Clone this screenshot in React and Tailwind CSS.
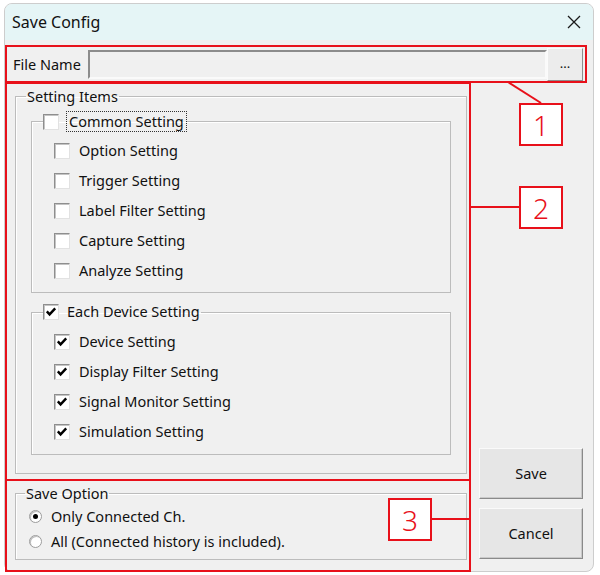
import React from 'react';

const FONT = { fontFamily: '"Noto Sans", "Liberation Sans", sans-serif' };

const COMMON_ITEMS = ['Option Setting', 'Trigger Setting', 'Label Filter Setting', 'Capture Setting', 'Analyze Setting'];
const DEVICE_ITEMS = ['Device Setting', 'Display Filter Setting', 'Signal Monitor Setting', 'Simulation Setting'];

function Check({ checked }) {
  return (
    <span className="w-[16px] h-[16px] shrink-0 bg-white border border-t-[#8e8e8e] border-l-[#8e8e8e] border-b-[#e2e2e2] border-r-[#e2e2e2] shadow-[inset_1px_1px_0_#c4c4c4] flex items-center justify-center">
      {checked && (
        <svg width="12" height="12" viewBox="0 0 12 12">
          <path d="M1.8 5.4 L4.6 8.4 L10.2 2.4" fill="none" stroke="#000" strokeWidth="2.4" />
        </svg>
      )}
    </span>
  );
}

function Radio({ checked }) {
  return (
    <span className="w-[13px] h-[13px] shrink-0 rounded-full bg-white border border-[#9c9c9c] shadow-[inset_1px_1px_0_#bdbdbd] flex items-center justify-center">
      {checked && <span className="w-[5px] h-[5px] rounded-full bg-black" />}
    </span>
  );
}

function Row({ label, checked }) {
  return (
    <div className="h-[30px] flex items-center gap-[9px] pl-[22px]">
      <Check checked={checked} />
      <span>{label}</span>
    </div>
  );
}

export default function App() {
  return (
    <div className="relative w-[600px] h-[575px] bg-white pt-[3px] pl-[4px] overflow-hidden text-[14.5px] text-[#111]" style={FONT}>
      {/* Dialog window */}
      <div className="w-[590px] h-[569px] rounded-t-[8px] rounded-b-[8px] border border-[#cdcdcd] bg-[#f0f0f0] overflow-hidden flex flex-col">
        <div className="h-[36px] shrink-0 bg-[#e5f5f6] flex items-center justify-between pl-[7px] pr-[12px]">
          <span className="text-[16px]">Save Config</span>
          <svg width="14" height="14" viewBox="0 0 14 14">
            <path d="M1 1 L13 13 M13 1 L1 13" stroke="#1a1a1a" strokeWidth="1.3" />
          </svg>
        </div>

        {/* File name row */}
        <div className="mt-[8px] h-[33px] flex items-center pl-[8px]">
          <span className="w-[75px]">File Name</span>
          <div className="w-[459px] h-[29px] bg-[#f0f0f0] border-2 border-t-[#8c8c8c] border-l-[#8c8c8c] border-b-[#fafafa] border-r-[#fafafa]" />
          <button
            type="button"
            className="w-[36px] h-[33px] bg-[#ececec] border border-t-[#fbfbfb] border-l-[#fbfbfb] border-b-[#8d8d8d] border-r-[#8d8d8d] text-[13px] leading-none pb-[3px]"
          >
            ...
          </button>
        </div>

        {/* Main */}
        <div className="mt-[7px] flex items-end pl-[10px]">
          <div className="w-[452px] flex flex-col">
            <fieldset className="border border-[#bcbcbc] shadow-[inset_1px_1px_0_#fff]">
              <legend className="ml-[10px] px-[1px] leading-[16px]">Setting Items</legend>
              <div className="px-[15px] pt-[7px] pb-[18px]">
                <fieldset className="border border-[#bcbcbc] shadow-[inset_1px_1px_0_#fff]">
                  <legend className="ml-[11px] h-[21px] flex items-center gap-[7px]">
                    <Check checked={false} />
                    <span className="h-[21px] px-[2px] flex items-center border border-dotted border-[#333]">Common Setting</span>
                  </legend>
                  <div className="pt-[4px] pb-[6px]">
                    {COMMON_ITEMS.map((t) => (
                      <Row key={t} label={t} checked={false} />
                    ))}
                  </div>
                </fieldset>

                <fieldset className="mt-[9px] border border-[#bcbcbc] shadow-[inset_1px_1px_0_#fff]">
                  <legend className="ml-[11px] h-[20px] flex items-center gap-[8px] pr-[1px]">
                    <Check checked />
                    <span>Each Device Setting</span>
                  </legend>
                  <div className="pt-[5px] pb-[7px]">
                    {DEVICE_ITEMS.map((t) => (
                      <Row key={t} label={t} checked />
                    ))}
                  </div>
                </fieldset>
              </div>
            </fieldset>

            <fieldset className="mt-[11px] border border-[#bcbcbc] shadow-[inset_1px_1px_0_#fff]">
              <legend className="ml-[9px] px-[1px] leading-[16px]">Save Option</legend>
              <div className="pt-[3px] pb-[5px] pl-[13px]">
                <div className="h-[25px] flex items-center gap-[9px]">
                  <Radio checked />
                  <span>Only Connected Ch.</span>
                </div>
                <div className="h-[25px] flex items-center gap-[9px]">
                  <Radio checked={false} />
                  <span>All (Connected history is included).</span>
                </div>
              </div>
            </fieldset>
          </div>

          <div className="ml-[12px] w-[104px] mb-[1px] flex flex-col gap-[9px]">
            <button type="button" className="h-[51px] bg-[#e6e6e6] border border-t-[#fafafa] border-l-[#fafafa] border-b-[#8a8a8a] border-r-[#8a8a8a] shadow-[inset_-1px_-1px_0_#c9c9c9]">
              Save
            </button>
            <button type="button" className="h-[51px] bg-[#e6e6e6] border border-t-[#fafafa] border-l-[#fafafa] border-b-[#8a8a8a] border-r-[#8a8a8a] shadow-[inset_-1px_-1px_0_#c9c9c9]">
              Cancel
            </button>
          </div>
        </div>
      </div>

      {/* Red annotations */}
      <div className="absolute left-[5px] top-[45px] w-[582px] h-[38px] border-2 border-[#e8101a]" />
      <div className="absolute left-[5px] top-[82px] w-[466px] h-[399px] border-2 border-[#e8101a]" />
      <div className="absolute left-[5px] top-[479px] w-[466px] h-[93px] border-2 border-[#e8101a]" />

      <svg className="absolute left-0 top-0" width="600" height="575">
        <line x1="508" y1="82" x2="541" y2="103" stroke="#e8101a" strokeWidth="2" />
      </svg>
      <div className="absolute left-[470px] top-[206px] w-[50px] h-[2px] bg-[#e8101a]" />
      <div className="absolute left-[430px] top-[518px] w-[40px] h-[2px] bg-[#e8101a]" />

      <div className="absolute left-[519px] top-[103px] w-[44px] h-[43px] border-2 border-[#e8101a] bg-white flex items-center justify-center text-[28px] text-[#e8101a] font-light leading-none">1</div>
      <div className="absolute left-[519px] top-[186px] w-[44px] h-[43px] border-2 border-[#e8101a] bg-white flex items-center justify-center text-[28px] text-[#e8101a] font-light leading-none">2</div>
      <div className="absolute left-[388px] top-[498px] w-[44px] h-[43px] border-2 border-[#e8101a] bg-white flex items-center justify-center text-[28px] text-[#e8101a] font-light leading-none">3</div>
    </div>
  );
}
